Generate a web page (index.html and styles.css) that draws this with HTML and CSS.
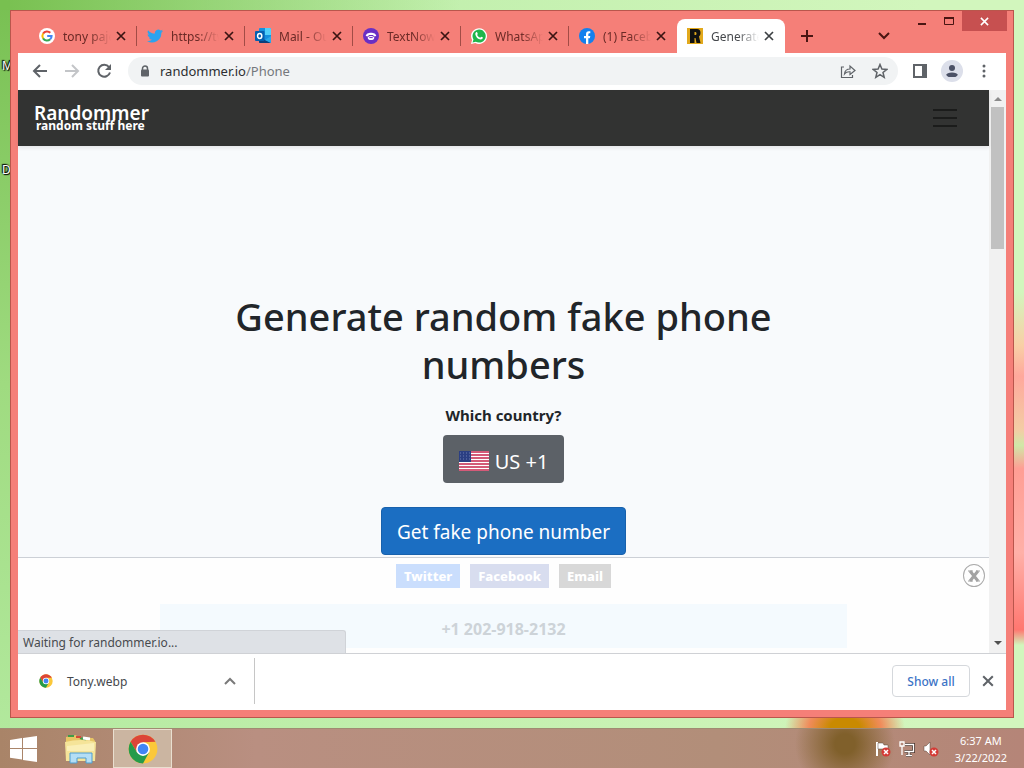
FILE: index.html
```html
<!DOCTYPE html>
<html lang="en">
<head>
    <meta charset="UTF-8">
    <meta name="viewport" content="width=device-width, initial-scale=1.0">
    <title>Generate random fake phone numbers</title>
    <link rel="stylesheet" href="styles.css">
</head>
<body>
    <svg class="defs" width="0" height="0">
        <symbol id="icon-close" viewBox="0 0 10 10"><path d="M1 1L9 9M9 1L1 9" stroke="currentColor" stroke-width="1.7" fill="none"/></symbol>
        <symbol id="icon-chrome" viewBox="0 0 48 48">
            <circle cx="24" cy="24" r="23" fill="#fbc83a"/>
            <path d="M4.1 12.5L14.5 29.5L24 24L24 13L43.9 12.5A23 23 0 0 0 4.1 12.5Z" fill="#dc4538"/>
            <path d="M4.1 12.5A23 23 0 0 0 24 47L33.5 29.5L24 24L14.5 29.5Z" fill="#259b4b"/>
            <circle cx="24" cy="24" r="11" fill="#fff"/>
            <circle cx="24" cy="24" r="8.5" fill="#4285f4"/>
        </symbol>
    </svg>
    <div class="desktop">
        <span class="desktop-label label-m">M</span>
        <span class="desktop-label label-d">D</span>
        <div class="window">
            <div class="tab-strip">
                <div class="tabs">
                    <div class="tab">
                        <svg class="favicon" viewBox="0 0 16 16"><circle cx="8" cy="8" r="8" fill="#fff"/><g fill="none" stroke-width="2"><path d="M4.1 5.6A4.6 4.6 0 0 1 11.3 4.8" stroke="#ea4335"/><path d="M4.1 10.4A4.6 4.6 0 0 1 4.1 5.6" stroke="#fbbc05"/><path d="M11.2 11.3A4.6 4.6 0 0 1 4.1 10.4" stroke="#34a853"/><path d="M8.2 8H12.6A4.6 4.6 0 0 1 11.2 11.3" stroke="#4285f4"/></g></svg>
                        <span class="tab-title">tony paje</span>
                        <button class="tab-close" aria-label="Close tab"><svg><use href="#icon-close"/></svg></button>
                    </div>
                    <div class="tab">
                        <svg class="favicon" viewBox="0 0 24 24"><path fill="#2aa3ef" d="M24 4.6a10 10 0 0 1-2.8.8 5 5 0 0 0 2.2-2.7c-1 .5-2 1-3.1 1.2a5 5 0 0 0-8.4 4.5A14 14 0 0 1 1.7 3.2a5 5 0 0 0 1.5 6.6 5 5 0 0 1-2.2-.6 5 5 0 0 0 4 4.9 5 5 0 0 1-2.2.1 5 5 0 0 0 4.6 3.4A10 10 0 0 1 0 19.5a14 14 0 0 0 21.5-12.4A10 10 0 0 0 24 4.6z"/></svg>
                        <span class="tab-title">https://tw</span>
                        <button class="tab-close" aria-label="Close tab"><svg><use href="#icon-close"/></svg></button>
                    </div>
                    <div class="tab">
                        <svg class="favicon" viewBox="0 0 16 16"><rect x="4" width="12" height="15" rx="1" fill="#1490df"/><path d="M10 0H15Q16 0 16 1V7H10Z" fill="#50d0fa"/><path d="M4 9L16 15H5Q4 15 4 14Z" fill="#0a3f7c"/><path d="M16 8V15L10 12Z" fill="#28a8ea"/><rect y="3" width="9.5" height="10" rx="1" fill="#0560b0"/><ellipse cx="4.7" cy="8" rx="2.1" ry="2.5" fill="none" stroke="#fff" stroke-width="1.5"/></svg>
                        <span class="tab-title">Mail - Out</span>
                        <button class="tab-close" aria-label="Close tab"><svg><use href="#icon-close"/></svg></button>
                    </div>
                    <div class="tab">
                        <svg class="favicon" viewBox="0 0 16 16"><circle cx="8" cy="8" r="8" fill="#6a2fc4"/><path d="M2.8 8C2.8 3.5 13.2 3.5 13.2 8L10.8 8.4L10.2 7H5.8L5.2 8.4Z" fill="#fff"/><path d="M4.6 9.4Q8 6.8 11.4 9.4Q11 12 8 12T4.6 9.4Z" fill="#fff"/><path d="M6.3 9.6H9.7" stroke="#6a2fc4"/></svg>
                        <span class="tab-title">TextNow</span>
                        <button class="tab-close" aria-label="Close tab"><svg><use href="#icon-close"/></svg></button>
                    </div>
                    <div class="tab">
                        <svg class="favicon" viewBox="0 0 16 16"><path d="M0 16L1.1 12A8 7.8 0 1 1 4.3 15Z" fill="#fff"/><path d="M1.5 14.5L2.5 11.5A6.6 6.5 0 1 1 4.8 13.7Z" fill="#1fb64b"/><path d="M5 4.2Q5.8 3.7 6.1 4.3L6.8 5.9L6.1 6.9Q7.2 8.9 9.2 9.7L10.2 8.7L12 9.6Q11.7 11.6 9.7 11.6Q5.3 10.9 4.3 6.3Q4.2 5 5 4.2Z" fill="#fff"/></svg>
                        <span class="tab-title">WhatsApp</span>
                        <button class="tab-close" aria-label="Close tab"><svg><use href="#icon-close"/></svg></button>
                    </div>
                    <div class="tab">
                        <svg class="favicon" viewBox="0 0 16 16"><circle cx="8" cy="8" r="8" fill="#1380ee"/><path d="M7 16V10.2H5V8H7V6.2Q7 3.3 9.8 3.3H11.3V5.3H10.3Q9.3 5.3 9.3 6.4V8H11.3L10.9 10.2H9.3V16Z" fill="#fff"/></svg>
                        <span class="tab-title">(1) Facebook</span>
                        <button class="tab-close" aria-label="Close tab"><svg><use href="#icon-close"/></svg></button>
                    </div>
                    <div class="tab active">
                        <svg class="favicon" viewBox="0 0 16 16"><rect width="16" height="16" fill="#e2a91c"/><path fill-rule="evenodd" d="M3 1H10Q13.5 1 13.5 5Q13.5 7.5 12 8.5L13.5 15H9.5L8.5 10H7.5V15H3ZM7.5 4V7H8.5Q9.5 7 9.5 5.5T8.5 4Z" fill="#111"/></svg>
                        <span class="tab-title">Generate</span>
                        <button class="tab-close" aria-label="Close tab"><svg><use href="#icon-close"/></svg></button>
                    </div>
                </div>
                <button class="new-tab" aria-label="New tab"><svg width="12" height="12"><path d="M6 0V12M0 6H12" stroke="currentColor" stroke-width="2"/></svg></button>
                <button class="tab-search" aria-label="Search tabs"><svg width="12" height="8"><path d="M1 1L6 6L11 1" fill="none" stroke="currentColor" stroke-width="2"/></svg></button>
                <div class="window-controls">
                    <button class="control" aria-label="Minimize"><svg width="10" height="10"><path d="M1 8H9" stroke="currentColor" stroke-width="2"/></svg></button>
                    <button class="control" aria-label="Maximize"><svg width="12" height="10"><path d="M1.5 1.5H10.5V8.5H1.5Z" fill="none" stroke="currentColor"/><path d="M1 2H11" stroke="currentColor" stroke-width="2"/></svg></button>
                    <button class="control control-close" aria-label="Close"><svg width="9" height="9"><use href="#icon-close"/></svg></button>
                </div>
            </div>

            <div class="toolbar">
                <button class="tool" aria-label="Back"><svg width="16" height="16"><path d="M15 8H2M8 2L2 8L8 14" fill="none" stroke="currentColor" stroke-width="2"/></svg></button>
                <button class="tool" aria-label="Forward" disabled><svg width="16" height="16"><path d="M1 8H14M8 2L14 8L8 14" fill="none" stroke="currentColor" stroke-width="2"/></svg></button>
                <button class="tool" aria-label="Reload"><svg width="16" height="16"><path d="M13 4A6 6 0 1 0 14 9.5" fill="none" stroke="currentColor" stroke-width="2"/><path d="M15 1V7H9Z" fill="currentColor"/></svg></button>
                <div class="omnibox">
                    <svg class="lock" width="10" height="12"><path d="M2.5 5V3.5A2.5 2.5 0 0 1 7.5 3.5V5" fill="none" stroke="#5f6368" stroke-width="1.5"/><rect x="1" y="4.5" width="8" height="7" rx="1" fill="#5f6368"/></svg>
                    <a class="url" href="#">randommer.io<span>/Phone</span></a>
                    <button class="tool" aria-label="Share"><svg width="16" height="16"><path d="M4 4H1.5V14.5H12.5V12M4.5 11Q5 6 10 6V3L15 7.5L10 11.5V8.8Q6.5 8.5 4.5 11Z" fill="none" stroke="currentColor" stroke-width="1.2"/></svg></button>
                    <button class="tool" aria-label="Bookmark"><svg width="16" height="16"><path d="M8 1.5L9.9 6L14.8 6.4L11 9.5L12.2 14.3L8 11.7L3.8 14.3L5 9.5L1.2 6.4L6.1 6Z" fill="none" stroke="currentColor" stroke-width="1.5"/></svg></button>
                </div>
                <button class="tool" aria-label="Side panel"><svg width="16" height="16"><path d="M2 2H14V14H2Z" fill="none" stroke="currentColor" stroke-width="2"/><path d="M10 2H14V14H10Z" fill="currentColor"/></svg></button>
                <button class="tool profile" aria-label="Profile"><svg viewBox="0 0 14 14"><circle cx="7" cy="4" r="3" fill="#4b5166"/><path d="M1 13V11Q2 8.5 7 8.5T13 11V13Z" fill="#4b5166"/></svg></button>
                <button class="tool" aria-label="Menu"><svg width="4" height="14"><circle cx="2" cy="2" r="1.5" fill="currentColor"/><circle cx="2" cy="7" r="1.5" fill="currentColor"/><circle cx="2" cy="12" r="1.5" fill="currentColor"/></svg></button>
            </div>

            <div class="viewport">
                <div class="page">
                    <nav class="navbar">
                        <a class="brand" href="#">Randommer<small>random stuff here</small></a>
                        <button class="menu-toggle" aria-label="Toggle navigation"><svg width="26" height="20"><path d="M1 2H25M1 10H25M1 18H25" stroke="currentColor" stroke-width="2"/></svg></button>
                    </nav>
                    <main class="hero">
                        <h1>Generate random fake phone numbers</h1>
                        <label class="country-label" for="country">Which country?</label>
                        <button class="btn btn-country" id="country">
                            <svg width="30" height="20"><rect width="30" height="20" fill="#fff"/><path d="M0 1H30M0 4H30M0 7H30M0 10H30M0 13H30M0 16H30M0 19H30" stroke="#c5254c" stroke-width="1.6"/><rect width="12" height="11" fill="#2b3f83"/><path d="M1 2H12M1 5H12M1 8H12" stroke="#6d7db0" stroke-dasharray="1 2"/></svg>
                            US +1
                        </button>
                        <button class="btn btn-generate">Get fake phone number</button>
                    </main>
                    <section class="banner">
                        <div class="share-links">
                            <a class="badge twitter" href="#">Twitter</a>
                            <a class="badge facebook" href="#">Facebook</a>
                            <a class="badge email" href="#">Email</a>
                        </div>
                        <div class="number">+1 202-918-2132</div>
                        <button class="banner-close" aria-label="Close banner"><svg width="12" height="12"><path d="M2 1L10 11M10 1L2 11" stroke="#a2a2a2" stroke-width="3"/><path d="M0 1H5M8 1H12M0 11H5M8 11H12" stroke="#a2a2a2"/></svg></button>
                    </section>
                    <div class="status">Waiting for randommer.io...</div>
                </div>
                <div class="scrollbar">
                    <svg width="8" height="5"><path d="M0 5L4 1L8 5Z" fill="#8b8b8b"/></svg>
                    <div class="thumb"></div>
                    <svg width="8" height="5"><path d="M0 0L4 4L8 0Z" fill="#505050"/></svg>
                </div>
            </div>

            <div class="downloads">
                <div class="download">
                    <svg width="14" height="14"><use href="#icon-chrome"/></svg>
                    <span class="file-name">Tony.webp</span>
                    <button class="tool" aria-label="Download options"><svg width="12" height="8"><path d="M1 7L6 2L11 7" fill="none" stroke="#7a7a7a" stroke-width="2"/></svg></button>
                </div>
                <button class="show-all">Show all</button>
                <button class="tool close-shelf" aria-label="Close downloads"><svg width="12" height="12"><use href="#icon-close"/></svg></button>
            </div>
        </div>
    </div>

    <footer class="taskbar">
        <button class="task" aria-label="Start"><svg width="28" height="26"><path d="M0 4L12 2V12H0ZM13 2L27 0V12H13ZM0 13H12V23.5L0 21.8ZM13 13H27V26L13 24Z" fill="#fff"/></svg></button>
        <button class="task" aria-label="File Explorer"><svg width="34" height="30"><path d="M2 3L12 1L14 4H29L31 7V26H2Z" fill="#e7c565"/><path d="M4 2H10M16 4L22 6" stroke="#3f9b48" stroke-width="2"/><path d="M12 3H17" stroke="#d54b39" stroke-width="2"/><path d="M19 4L26 5" stroke="#fff" stroke-width="3"/><path d="M1 8Q17 4 32 8L31 27H2Z" fill="#f5e499"/><path d="M3 12L30 9V17H3Z" fill="#faefb7"/><path d="M6 29V19H28V29H22V24H13V29Z" fill="#b4def5" stroke="#4f9ed0"/></svg></button>
        <button class="task task-active" aria-label="Google Chrome"><svg width="30" height="30"><use href="#icon-chrome"/></svg></button>
        <div class="tray">
            <svg width="16" height="16"><path d="M2 1V15" stroke="#fff" stroke-width="2"/><path d="M3 2H8L9 4H13V8H3Z" fill="#fff" stroke="#5b4439" stroke-width=".5"/><circle cx="11" cy="11" r="4.500" fill="#d43b36"/><path d="M9 9L13 13M13 9L9 13" stroke="#fff" stroke-width="1.5"/></svg>
            <svg width="16" height="16"><g fill="none" stroke="#4d3931" stroke-width="3"><path d="M6 3.5H14.5V10.5H5.5M10 11V14M7 14.5H13"/></g><g fill="none" stroke="#fff" stroke-width="1.3"><path d="M6 3.5H14.5V10.5H5.5M10 11V14M7 14.5H13"/><path d="M1 1V5H5V1ZM3 5V14"/></g></svg>
            <svg width="16" height="16"><path d="M1 5H3L7 1V14L3 10H1Z" fill="#fff" stroke="#5b4439" stroke-width=".5"/><circle cx="11" cy="11" r="4.5" fill="#d43b36"/><path d="M9 9L13 13M13 9L9 13" stroke="#fff" stroke-width="1.5"/></svg>
        </div>
        <time class="clock">6:37 AM<br>3/22/2022</time>
    </footer>
</body>
</html>
```
FILE: styles.css
```css
* {
    box-sizing: border-box;
}
body {
    margin: 0;
    height: 100vh;
    display: flex;
    flex-direction: column;
    overflow: hidden;
    font-family: "Noto Sans", "Open Sans", sans-serif;
    font-size: 12px;
    background:
        linear-gradient(to bottom, transparent 38%, #f9cfa6 45%, #ffa89c 49%, #f3cda5 56%, #d0e8a8 58%, #ff9e94 61%, #ffb0a8 72%, #ff7770 82%, transparent 84%) right top / 12px 100% no-repeat,
        radial-gradient(ellipse 60px 40px at 845px 728px, #c98a00 25%, #f08b5a 60%, transparent 100%),
        linear-gradient(to right, #78c050 0, transparent 45%) left top / 100% 10px no-repeat,
        linear-gradient(to bottom, #78c052 0, #9fdb80 50%, #b4eaa0 100%) left top / 10px 100% no-repeat,
        linear-gradient(to right, #b4eaa0, #d2f6bd 90%);
}
button {
    padding: 0;
    border: none;
    background: none;
    font: inherit;
    color: inherit;
    display: flex;
    align-items: center;
    justify-content: center;
}
a {
    color: inherit;
    text-decoration: none;
}
.defs {
    position: absolute;
}
.desktop {
    position: relative;
    flex: 1;
    min-height: 0;
    padding: 10px;
    display: flex;
}
.desktop-label {
    position: absolute;
    color: #fff;
    text-shadow: 1px 1px 1px #000, -1px -1px 1px #000, 0 0 2px #000;
    line-height: 16px;
}
.label-m {
    left: 2px;
    top: 58px;
}
.label-d {
    left: 2px;
    top: 162px;
}
.window {
    position: relative;
    flex: 1;
    min-width: 0;
    display: flex;
    flex-direction: column;
    background-color: #f57f78;
    border: 1px solid #b9564c;
    padding: 0 7px 7px;
}

/* Tabs */
.tab-strip {
    height: 42px;
    display: flex;
    align-items: flex-end;
    color: #4a1512;
}
.tabs {
    display: flex;
    padding-left: 11px;
}
.tab {
    position: relative;
    width: 108px;
    height: 34px;
    display: flex;
    align-items: center;
    padding: 0 10px;
    color: #6b2a26;
}
.tab::after {
    content: "";
    position: absolute;
    right: 0;
    top: 7px;
    width: 1px;
    height: 20px;
    background-color: #a24c46;
}
.tab.active::after, .tab:nth-last-child(2)::after {
    display: none;
}
.tab.active {
    background-color: #fff;
    border-radius: 8px 8px 0 0;
    color: #45484c;
}
.favicon {
    width: 16px;
    height: 16px;
    flex: none;
}
.tab-title {
    flex: 1;
    margin: 0 4px 0 8px;
    overflow: hidden;
    white-space: nowrap;
    mask-image: linear-gradient(to right, #000 55%, transparent);
}
.tab-close {
    width: 12px;
    height: 12px;
    color: #3b1413;
}
.tab.active .tab-close {
    color: #3c4043;
}
.tab-close svg {
    width: 10px;
    height: 10px;
}
.new-tab {
    width: 28px;
    height: 34px;
    margin-left: 8px;
}
.tab-search {
    width: 28px;
    height: 34px;
    margin-left: auto;
}
.window-controls {
    display: flex;
    align-self: flex-start;
    margin: 0 -1px 0 10px;
}
.control {
    width: 27px;
    height: 20px;
}
.control-close {
    width: 45px;
    background-color: #c75050;
    color: #fff;
}

/* Toolbar */
.toolbar {
    height: 37px;
    flex: none;
    display: flex;
    align-items: center;
    background-color: #fff;
    color: #5f6368;
    padding: 0 6px 2px;
}
.tool {
    width: 32px;
    height: 28px;
    color: #5f6368;
}
.tool:disabled {
    color: #c3c5c8;
}
.omnibox {
    flex: 1;
    height: 28px;
    margin: 0 6px 0 8px;
    padding: 0 2px 0 12px;
    border-radius: 14px;
    background-color: #f1f3f4;
    display: flex;
    align-items: center;
}
.url {
    flex: 1;
    margin-left: 10px;
    font-size: 13px;
    color: #2c2e31;
}
.url span {
    color: #75787c;
}
.profile svg {
    padding: 4px;
    width: 22px;
    height: 22px;
    border-radius: 50%;
    background-color: #dcdfea;
}

/* Page */
.viewport {
    flex: 1;
    min-height: 0;
    display: flex;
}
.page {
    position: relative;
    flex: 1;
    display: flex;
    flex-direction: column;
    background-color: #f8fafc;
    color: #212529;
}
.navbar {
    height: 56px;
    flex: none;
    padding: 0 31px 0 16px;
    display: flex;
    align-items: center;
    justify-content: space-between;
    background-color: #323332;
    box-shadow: 0 2px 4px rgba(0, 0, 0, 0.08);
}
.brand {
    color: #fff;
    font-size: 19px;
    font-weight: 600;
    line-height: 16px;
}
.brand small {
    display: block;
    padding-left: 2px;
    font-size: 12px;
    line-height: 10px;
    font-weight: 700;
}
.menu-toggle {
    color: #1b1c1b;
}
.hero {
    flex: 1;
    min-height: 0;
    padding: 0 16px 2px;
    display: flex;
    flex-direction: column;
    align-items: center;
    justify-content: flex-end;
}
.hero h1 {
    max-width: 600px;
    margin: 0 0 16px;
    font-size: 38px;
    line-height: 48px;
    font-weight: 500;
    text-align: center;
}
.country-label {
    margin-bottom: 8px;
    font-size: 15px;
    line-height: 23px;
    font-weight: 700;
}
.btn {
    height: 48px;
    padding: 2px 15px 0;
    border-radius: 4px;
    color: #fff;
    font-size: 19px;
}
.btn-country {
    gap: 6px;
    padding: 4px 16px 0;
    margin-bottom: 24px;
    font-size: 20px;
    background-color: #5c6167;
}
.btn-generate {
    background-color: #1b6ec2;
    border: 1px solid #1861ac;
}
.banner {
    position: relative;
    height: 96px;
    flex: none;
    padding: 6px 142px 5px;
    display: flex;
    flex-direction: column;
    justify-content: space-between;
    background-color: #fefefe;
    border-top: 1px solid #ccd0d6;
}
.share-links {
    display: flex;
    justify-content: center;
    gap: 10px;
}
.badge {
    height: 24px;
    padding: 0 8px;
    color: #fff;
    font-size: 13px;
    font-weight: 800;
    line-height: 24px;
}
.twitter {
    background-color: #cadefd;
}
.facebook {
    background-color: #d8ddef;
}
.email {
    background-color: #d8d8d8;
}
.number {
    height: 44px;
    line-height: 50px;
    text-align: center;
    font-size: 16px;
    font-weight: 700;
    color: #cdd3d8;
    background-color: #f4fafe;
}
.banner-close {
    position: absolute;
    right: 4px;
    top: 6px;
    width: 22px;
    height: 23px;
    border: 1px solid #aaa;
    border-radius: 50%;
}
.status {
    position: absolute;
    left: 0;
    bottom: 0;
    width: 328px;
    height: 23px;
    padding-left: 5px;
    line-height: 23px;
    color: #484b4f;
    background-color: #dee1e6;
    border: 1px solid #d0d3d8;
    border-width: 1px 1px 0 0;
    border-radius: 0 3px 0 0;
}
.scrollbar {
    width: 17px;
    padding: 6px 2px 7px;
    display: flex;
    flex-direction: column;
    align-items: center;
    background-color: #f1f1f1;
}
.thumb {
    width: 13px;
    height: 142px;
    margin: 6px 0 auto;
    background-color: #c1c1c1;
}

/* Download shelf */
.downloads {
    height: 57px;
    flex: none;
    display: flex;
    align-items: center;
    background-color: #fff;
    border-top: 1px solid #cfd1d5;
    padding: 0 2px 2px 0;
}
.download {
    width: 237px;
    height: 46px;
    padding: 0 8px 0 21px;
    display: flex;
    align-items: center;
    border-right: 1px solid #c6c6c6;
    color: #45484c;
}
.file-name {
    flex: 1;
    margin-left: 14px;
}
.show-all {
    width: 78px;
    height: 32px;
    margin-left: auto;
    border: 1px solid #d5d8dc;
    border-radius: 4px;
    color: #3c74c6;
    font-weight: 500;
}
.close-shelf {
    margin-left: 2px;
}

/* Taskbar */
.taskbar {
    height: 40px;
    flex: none;
    display: flex;
    align-items: center;
    padding-right: 17px;
    color: #fff;
    background:
        radial-gradient(ellipse 50px 50px at 845px 15px, #80602b 20%, transparent),
        linear-gradient(to right, #a98468, #b98f81 25%, #b28e79 70%, #b58578);
    border-top: 1px solid #a08b72;
}
.task {
    width: 48px;
    height: 39px;
}
.task + .task {
    width: 65px;
}
.task + .task-active {
    width: 59px;
    background-color: #cbb5a1;
    border: 1px solid #e9dfd0;
}
.tray {
    display: flex;
    gap: 8px;
    margin-left: auto;
}
.clock {
    margin-left: 16px;
    font-size: 11px;
    line-height: 17px;
    text-align: center;
}
```
